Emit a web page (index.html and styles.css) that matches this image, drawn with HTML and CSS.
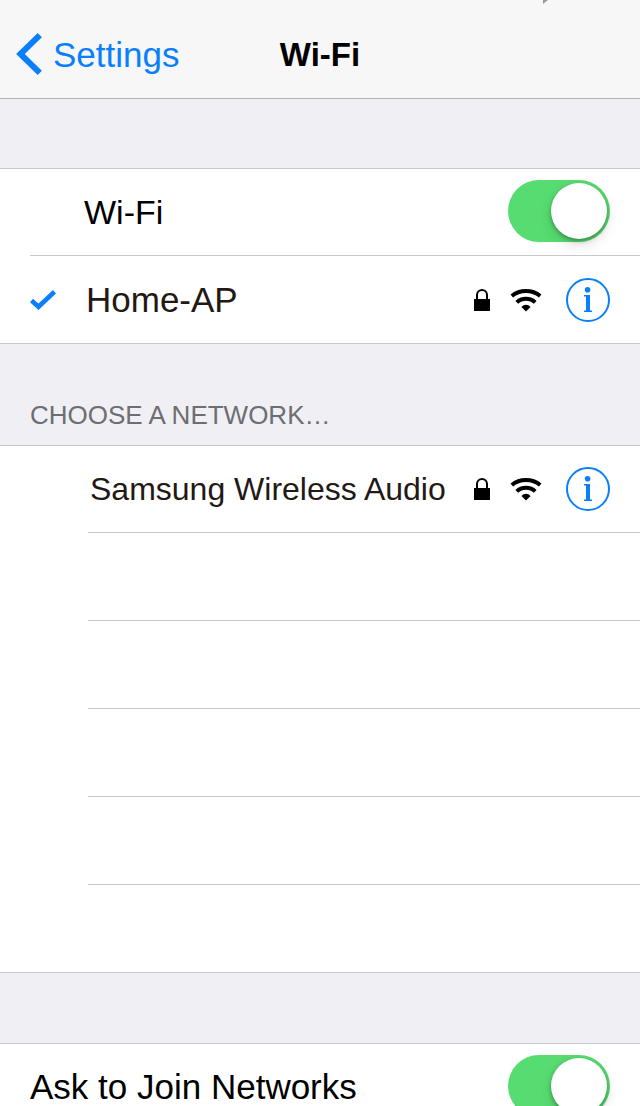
FILE: index.html
```html
<!DOCTYPE html>
<html lang="en">
<head>
<meta charset="utf-8">
<meta name="viewport" content="width=device-width, initial-scale=1">
<title>Wi-Fi</title>
<link rel="stylesheet" href="styles.css">
</head>
<body>
<svg class="symbols" aria-hidden="true">
  <symbol id="lock" viewBox="0 0 16 22">
    <path d="M3 11V6a5 5 0 0 1 10 0v5" fill="none" stroke="#000" stroke-width="2"/>
    <path d="M0 10h16v12H0z"/>
  </symbol>
  <symbol id="signal" viewBox="0 0 32 24">
    <path d="M1.800 8Q7.800 3 16 3t14.200 5" fill="none" stroke="#000" stroke-width="4"/>
    <path d="M6.800 14.400Q10.500 10.800 16 10.800t9.200 3.600" fill="none" stroke="#000" stroke-width="4"/>
    <path d="M11.400 19Q13.400 16.800 16 16.800t4.600 2.200L16 23.600z"/>
  </symbol>
  <symbol id="info" viewBox="0 0 44 44">
    <circle cx="22" cy="22" r="21" fill="none" stroke="#0b7ffb" stroke-width="2"/>
    <circle cx="21.600" cy="11.800" r="2.800" fill="#0b7ffb"/>
    <path d="M18 17h6v15.500h2V34h-8v-1.500h2v-14h-2z" fill="#0b7ffb"/>
  </symbol>
</svg>

<header class="navbar">
  <svg class="location" viewBox="0 0 5 4" aria-hidden="true"><path d="M0 0h5L0 4z" fill="#999"/></svg>
  <a class="back" href="#settings">
    <svg class="chevron" viewBox="0 1 26 42" aria-hidden="true"><path d="M23.800 2.200 4.400 21l19.400 18.800" fill="none" stroke="#0a7ffb" stroke-width="6"/></svg>
    <span>Settings</span>
  </a>
  <h1 class="title">Wi-Fi</h1>
</header>

<main>
  <section class="group group-current">
    <div class="row row-toggle">
      <label class="label" for="wifi">Wi-Fi</label>
      <input class="switch" id="wifi" type="checkbox" role="switch" checked>
    </div>
    <div class="row row-connected">
      <svg class="check" viewBox="0 0 26 20" aria-hidden="true"><path d="M1.500 10.500 8.500 16.800 24.500 1.800" fill="none" stroke="#0a7ffb" stroke-width="4.600"/></svg>
      <span class="network current">Home-AP</span>
      <svg class="lock" role="img" aria-label="Secured"><use href="#lock"/></svg>
      <svg class="signal" role="img" aria-label="Strong signal"><use href="#signal"/></svg>
      <button class="info" type="button" aria-label="Home-AP details"><svg aria-hidden="true"><use href="#info"/></svg></button>
    </div>
  </section>

  <h2 class="section-title">CHOOSE A NETWORK…</h2>
  <ul class="group networks">
    <li class="row">
      <span class="network">Samsung Wireless Audio</span>
      <svg class="lock" role="img" aria-label="Secured"><use href="#lock"/></svg>
      <svg class="signal" role="img" aria-label="Strong signal"><use href="#signal"/></svg>
      <button class="info" type="button" aria-label="Samsung Wireless Audio details"><svg aria-hidden="true"><use href="#info"/></svg></button>
    </li>
    <li class="row"></li>
    <li class="row"></li>
    <li class="row"></li>
    <li class="row"></li>
    <li class="row"></li>
  </ul>

  <section class="group group-ask">
    <div class="row row-ask">
      <label class="label ask" for="ask">Ask to Join Networks</label>
      <input class="switch" id="ask" type="checkbox" role="switch" checked>
    </div>
  </section>
</main>
</body>
</html>
```
FILE: styles.css
```css
* {
  box-sizing: border-box;
}

body {
  height: 100vh;
  margin: 0;
  overflow: hidden;
  background: #efeff4;
  color: #000;
  font-family: "Liberation Sans", Arial, sans-serif;
  font-size: 34px;
  line-height: 40px;
}

.symbols {
  position: absolute;
  width: 0;
  height: 0;
}

.navbar {
  position: relative;
  display: grid;
  grid-template-columns: 1fr auto 1fr;
  align-items: center;
  padding: 35px 16px 23px;
  background: #f7f7f7;
  border-bottom: 1px solid #b2b2b6;
}

.location {
  position: absolute;
  top: 0;
  left: 543px;
  width: 5px;
  height: 4px;
}

.back {
  display: flex;
  align-items: center;
  gap: 11px;
  height: 40px;
  color: #0a7ffb;
  font-size: 35px;
  text-decoration: none;
}

.chevron {
  width: 26px;
  height: 42px;
  overflow: visible;
}

.title {
  margin: 0;
  font-size: 33px;
  font-weight: bold;
}

.group {
  margin: 0;
  padding: 0;
  background: #fff;
  box-shadow: inset 0 1px #c8c7cc, inset 0 -1px #c8c7cc;
  list-style: none;
}

.group-current {
  margin-top: 69px;
}

.group-ask {
  margin-top: 70px;
}

.row {
  display: flex;
  align-items: center;
  height: 88px;
  margin-left: 30px;
  padding-right: 30px;
  border-bottom: 1px solid #c8c7cc;
}

.networks .row {
  margin-left: 88px;
}

.label {
  flex: 1;
}

.row-toggle {
  padding-left: 54px;
}

.ask {
  font-size: 35px;
}

.network {
  flex: 1;
  padding-left: 2px;
  color: #231815;
  font-size: 32px;
  white-space: nowrap;
}

.current {
  padding-left: 30px;
  font-size: 35px;
}

.check {
  width: 26px;
  height: 20px;
}

.lock {
  width: 16px;
  height: 22px;
}

.signal {
  width: 32px;
  height: 24px;
  margin: 0 24px 0 20px;
}

.info {
  width: 44px;
  height: 44px;
  padding: 0;
  border: 0;
  background: none;
}

.info svg {
  display: block;
  width: 44px;
  height: 44px;
}

.switch {
  display: flex;
  justify-content: flex-end;
  width: 102px;
  height: 62px;
  margin: 0 0 2px;
  padding: 3px;
  appearance: none;
  background: #57dc71;
  border-radius: 31px;
}

.switch::before {
  content: "";
  width: 56px;
  height: 56px;
  background: #fff;
  border-radius: 50%;
  box-shadow: 0 2px 4px rgba(0, 0, 0, 0.3), 0 6px 14px rgba(0, 0, 0, 0.12);
}

.switch:not(:checked) {
  justify-content: flex-start;
  background: #e5e5ea;
}

.section-title {
  margin: 0;
  padding: 51px 30px 10px;
  color: #6d6d72;
  font-size: 26px;
  font-weight: normal;
}
```
